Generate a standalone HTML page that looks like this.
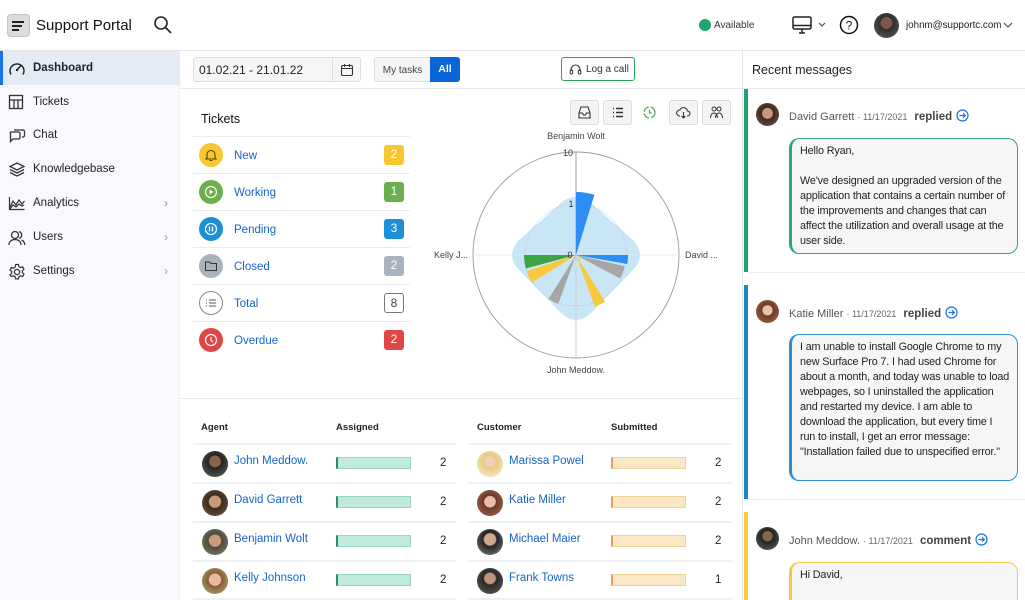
<!DOCTYPE html>
<html><head><meta charset="utf-8"><style>
*{box-sizing:border-box;margin:0;padding:0}
html,body{width:1025px;height:600px;overflow:hidden}
body{font-family:"Liberation Sans",sans-serif;color:#1f2328;background:#fff;position:relative;font-size:11px}
.a{position:absolute}
.hdr{left:0;top:0;width:1025px;height:51px;border-bottom:1px solid #e3e5e8;background:#fff}
.side{left:0;top:51px;width:180px;height:549px;background:#f8f9fc;border-right:1px solid #eceef1}
.nav{position:absolute;left:0;width:180px;height:34px;display:flex;align-items:center;padding-left:33px;font-size:11.5px;color:#222}
.nav svg{position:absolute;left:8px;top:9px}
.nav .chev{position:absolute;left:164px;color:#999;font-size:12px}
.row{position:absolute;left:193px;width:217px;height:37px;border-top:1px solid #ececec}
.ic{position:absolute;left:6px;top:6px;width:24px;height:24px;border-radius:50%}
.lbl{position:absolute;left:41px;top:13px;font-size:11.5px;color:#1565c8}
.bd{position:absolute;left:191px;top:8px;width:20px;height:20px;border-radius:3px;color:#fff;font-size:12px;text-align:center;line-height:19px}
.tr{position:absolute;height:39px;border-top:2px solid #eef0f2}
.av{position:absolute;left:9px;top:6px;width:26px;height:26px;border-radius:50%}
.tr .n{position:absolute;left:41px;top:10px;font-size:11.5px;color:#1565c8}
.bar{position:absolute;left:143px;top:12px;width:75px;height:12px}
.cnt{position:absolute;left:247px;top:12px;font-size:11.5px}
.msgbar{position:absolute;left:744px;width:4px}
.bub{position:absolute;left:789px;width:229px;background:#f6f6f7;border-radius:10px;border:1.5px solid;border-left-width:3px;padding:5px 7px 5px 8px;font-size:10.8px;letter-spacing:-0.15px;line-height:15px;color:#222;overflow:hidden}
.mh{position:absolute;left:789px;font-size:11px;color:#555;white-space:nowrap}
.mh b{color:#444;font-size:11.5px;margin-left:4px}
.mh small{font-size:9px;color:#666}
.mh svg{vertical-align:-2px;margin-left:4px}
.mav{position:absolute;left:756px;width:23px;height:23px;border-radius:50%}
.tb{position:absolute;top:100px;width:29px;height:25px;border:1px solid #ddd;background:#f3f4f5;border-radius:3px}
</style></head><body>
<div class="a hdr"></div>
<div class="a" style="left:7px;top:14px;width:23px;height:23px;background:#dcdcdc;border:1px solid #c4c4c4;border-radius:4px"></div>
<div class="a" style="left:12px;top:21px;width:12px;height:1.5px;background:#222"></div>
<div class="a" style="left:12px;top:25px;width:10px;height:1.5px;background:#222"></div>
<div class="a" style="left:12px;top:29px;width:7px;height:1.5px;background:#222"></div>
<div class="a" style="left:36px;top:17px;font-size:15px;color:#111">Support Portal</div>
<svg class="a" style="left:153px;top:15px" width="20" height="20" viewBox="0 0 20 20"><circle cx="8" cy="8" r="6" fill="none" stroke="#222" stroke-width="1.6"/><path d="M12.5 12.5L18 18" stroke="#222" stroke-width="1.6"/></svg>
<div class="a" style="left:699px;top:19px;width:12px;height:12px;border-radius:50%;background:#1fa56f"></div>
<div class="a" style="left:714px;top:20px;font-size:10px;color:#333">Available</div>
<svg class="a" style="left:792px;top:15px" width="36" height="20" viewBox="0 0 36 20"><rect x="1" y="2" width="18" height="12" rx="1.5" fill="none" stroke="#222" stroke-width="1.5"/><path d="M1 10.5h18M7 18h6M10 14v4" stroke="#222" stroke-width="1.5"/><path d="M27 8l3 3 3-3" fill="none" stroke="#444" stroke-width="1.1"/></svg>
<svg class="a" style="left:839px;top:15px" width="20" height="20" viewBox="0 0 20 20"><circle cx="10" cy="10" r="8.5" fill="none" stroke="#111" stroke-width="1.5"/><text x="10" y="14.5" font-size="12" text-anchor="middle" font-family="Liberation Sans" fill="#111">?</text></svg>
<div class="a" style="left:874px;top:13px;width:25px;height:25px;border-radius:50%;background:radial-gradient(circle at 50% 40%,#7a5a44 0 30%,#2e2e2e 31%,#59615a)"></div>
<div class="a" style="left:906px;top:20px;font-size:9.8px;color:#222">johnm@supportc.com</div>
<svg class="a" style="left:1003px;top:21px" width="10" height="8"><path d="M1 2l4 4 4-4" fill="none" stroke="#444" stroke-width="1.1"/></svg>

<div class="a side"></div>
<div class="nav" style="top:51px;background:#e4ebf5;border-left:3px solid #1a73e8;font-weight:bold;color:#1b2430;padding-left:30px"><svg width="18" height="18" viewBox="0 0 18 18" style="left:5px"><path d="M3 14.5A7 7 0 1 1 15 14.5" fill="none" stroke="#222" stroke-width="1.4"/><path d="M9 10l3.5-4" stroke="#222" stroke-width="1.4"/><circle cx="9" cy="10" r="1.2" fill="#222"/></svg>Dashboard</div>
<div class="nav" style="top:85px"><svg width="16" height="16" viewBox="0 0 16 16"><rect x="1.5" y="1.5" width="13" height="13" fill="none" stroke="#333" stroke-width="1.3"/><path d="M1.5 6h13M6 6v8.5M10 6v8.5" stroke="#333" stroke-width="1.3"/></svg>Tickets</div>
<div class="nav" style="top:118px"><svg width="18" height="16" viewBox="0 0 18 16"><path d="M6 3h9a1.5 1.5 0 0 1 1.5 1.5v4A1.5 1.5 0 0 1 15 10h-1M2.5 5h8A1.5 1.5 0 0 1 12 6.5v4a1.5 1.5 0 0 1-1.5 1.5H5l-2.5 2.5V6.5A1.5 1.5 0 0 1 2.5 5" fill="none" stroke="#333" stroke-width="1.3"/></svg>Chat</div>
<div class="nav" style="top:152px"><svg width="18" height="16" viewBox="0 0 18 16"><path d="M9 2l7 3.5-7 3.5-7-3.5zM2 8.5l7 3.5 7-3.5M2 11.5l7 3.5 7-3.5" fill="none" stroke="#333" stroke-width="1.3"/></svg>Knowledgebase</div>
<div class="nav" style="top:186px"><svg width="18" height="16" viewBox="0 0 18 16"><path d="M1.5 2v12.5h15M2 12l3-6 3 4 3-5 3 4 2.5-3M2 14l3-4 3 2 3-3 3 2 2-1" fill="none" stroke="#333" stroke-width="1.2"/></svg>Analytics<span class="chev">›</span></div>
<div class="nav" style="top:220px"><svg width="18" height="18" viewBox="0 0 18 18"><circle cx="7" cy="6" r="3.5" fill="none" stroke="#333" stroke-width="1.3"/><path d="M1 16c0-3.5 2.7-5.5 6-5.5s6 2 6 5.5M11 2.6a3.5 3.5 0 0 1 0 6.8M13.5 11c2 .8 3.2 2.6 3.2 5" fill="none" stroke="#333" stroke-width="1.3"/></svg>Users<span class="chev">›</span></div>
<div class="nav" style="top:254px"><svg width="18" height="18" viewBox="0 0 18 18"><circle cx="9" cy="9" r="2.6" fill="none" stroke="#333" stroke-width="1.3"/><path d="M7.6 1.5h2.8l.5 2.2 1.6.9 2.1-.7 1.4 2.4-1.7 1.5v1.8l1.7 1.5-1.4 2.4-2.1-.7-1.6.9-.5 2.2H7.6l-.5-2.2-1.6-.9-2.1.7L2 11.700l1.7-1.5V8.4L2 6.9l1.4-2.4 2.1.7 1.6-.9z" fill="none" stroke="#333" stroke-width="1.2"/></svg>Settings<span class="chev">›</span></div>

<!-- toolbar -->
<div class="a" style="left:193px;top:57px;width:168px;height:25px;border:1px solid #ddd;border-radius:3px;background:#f5f6f7"></div>
<div class="a" style="left:332px;top:57px;width:1px;height:25px;background:#ddd"></div>
<div class="a" style="left:199px;top:63px;font-size:12px;color:#222">01.02.21 - 21.01.22</div>
<svg class="a" style="left:340px;top:63px" width="14" height="14" viewBox="0 0 14 14"><rect x="1.5" y="2.5" width="11" height="10" rx="1.5" fill="none" stroke="#333" stroke-width="1.1"/><path d="M1.5 5.5h11M4.5 1v3M9.5 1v3" stroke="#333" stroke-width="1.1"/></svg>
<div class="a" style="left:374px;top:57px;width:57px;height:25px;border:1px solid #ddd;border-radius:3px 0 0 3px;background:#f5f6f7;font-size:10px;color:#444;text-align:center;line-height:25px">My tasks</div>
<div class="a" style="left:430px;top:57px;width:30px;height:25px;background:#0a66d6;border-radius:0 3px 3px 0;color:#fff;font-weight:bold;font-size:10.5px;text-align:center;line-height:25px">All</div>
<div class="a" style="left:561px;top:57px;width:74px;height:24px;border:1px solid #2aa45a;border-radius:3px;font-size:10px;color:#333;line-height:24px;padding-left:24px">Log a call</div>
<svg class="a" style="left:569px;top:63px" width="13" height="13" viewBox="0 0 13 13"><path d="M2 8V6.5a4.5 4.5 0 0 1 9 0V8" fill="none" stroke="#333" stroke-width="1.1"/><rect x="1.2" y="7" width="2.5" height="4" rx="1" fill="none" stroke="#333"/><rect x="9.3" y="7" width="2.5" height="4" rx="1" fill="none" stroke="#333"/></svg>
<div class="a" style="left:180px;top:88px;width:562px;height:1px;background:#e6e7e9"></div>
<div class="a" style="left:180px;top:398px;width:562px;height:1px;background:#e6e7e9"></div>
<div class="a" style="left:742px;top:51px;width:1px;height:549px;background:#e6e7e9"></div>

<!-- tickets -->
<div class="a" style="left:201px;top:112px;font-size:12.5px;color:#111">Tickets</div>
<div class="row" style="top:136px"><div class="ic" style="background:#f7c630"></div><svg class="a" style="left:11px;top:11px" width="14" height="14" viewBox="0 0 14 14"><path d="M3 10V6.5a4 4 0 0 1 8 0V10l1 1H2zM5.5 12.5h3" fill="none" stroke="#5a4300" stroke-width="1.1"/></svg><div class="lbl">New</div><div class="bd" style="background:#f7c630">2</div></div>
<div class="row" style="top:173px"><div class="ic" style="background:#6ab04c"></div><svg class="a" style="left:11px;top:11px" width="14" height="14"><circle cx="7" cy="7" r="5.5" fill="none" stroke="#fff" stroke-width="1.2"/><path d="M5.5 4.5v5l4-2.5z" fill="#fff"/></svg><div class="lbl">Working</div><div class="bd" style="background:#6ab04c">1</div></div>
<div class="row" style="top:210px"><div class="ic" style="background:#1d8fd6"></div><svg class="a" style="left:11px;top:11px" width="14" height="14"><circle cx="7" cy="7" r="5.5" fill="none" stroke="#fff" stroke-width="1.2"/><path d="M5.5 4.5v5M8.5 4.5v5" stroke="#fff" stroke-width="1.3"/></svg><div class="lbl">Pending</div><div class="bd" style="background:#1d8fd6">3</div></div>
<div class="row" style="top:247px"><div class="ic" style="background:#aab3bd"></div><svg class="a" style="left:11px;top:11px" width="14" height="14"><path d="M1.5 3h4l1.5 1.5h5.5v7h-11z" fill="none" stroke="#333" stroke-width="1"/></svg><div class="lbl">Closed</div><div class="bd" style="background:#aab3bd">2</div></div>
<div class="row" style="top:284px"><div class="ic" style="border:1px solid #888"></div><svg class="a" style="left:11px;top:11px" width="14" height="14"><path d="M2 4h1M2 7h1M2 10h1M5 4h7M5 7h7M5 10h7" stroke="#555" stroke-width="1.1"/></svg><div class="lbl">Total</div><div class="bd" style="border:1px solid #777;color:#444">8</div></div>
<div class="row" style="top:321px"><div class="ic" style="background:#e04646"></div><svg class="a" style="left:11px;top:11px" width="14" height="14"><circle cx="7" cy="7" r="5.5" fill="none" stroke="#fff" stroke-width="1.2"/><path d="M7 4v3.5l2 1.5" fill="none" stroke="#fff" stroke-width="1.2"/></svg><div class="lbl">Overdue</div><div class="bd" style="background:#e04646">2</div></div>

<!-- chart tool buttons -->
<div class="tb" style="left:570px"></div><div class="tb" style="left:603px"></div><div class="tb" style="left:669px"></div><div class="tb" style="left:702px"></div>
<svg class="a" style="left:577px;top:105px" width="15" height="15"><path d="M2 8l2-6h7l2 6v5H2zM2 8h3.5l1 2h2l1-2H13" fill="none" stroke="#333" stroke-width="1.1"/></svg>
<svg class="a" style="left:610px;top:105px" width="15" height="15"><path d="M3 3.5h1M3 7.5h1M3 11.5h1M6 3.5h7M6 7.5h7M6 11.5h7" stroke="#333" stroke-width="1.5"/></svg>
<svg class="a" style="left:642px;top:105px" width="15" height="15"><circle cx="7.5" cy="7.5" r="5.5" fill="none" stroke="#4aa35a" stroke-width="1.3" stroke-dasharray="7 2"/><path d="M7.5 4.5v3.5h2" fill="none" stroke="#4aa35a" stroke-width="1.2"/></svg>
<svg class="a" style="left:676px;top:105px" width="15" height="15"><path d="M4 11H3.5a3 3 0 0 1 .3-6 4 4 0 0 1 7.6 1 2.5 2.5 0 0 1 .1 5H11M7.5 7v6M5.5 11l2 2 2-2" fill="none" stroke="#333" stroke-width="1.1"/></svg>
<svg class="a" style="left:709px;top:105px" width="15" height="15"><circle cx="5" cy="4" r="2" fill="none" stroke="#333"/><circle cx="10" cy="4" r="2" fill="none" stroke="#333"/><path d="M1.5 13c0-3 1.5-5 3.5-5s3.5 2 3.5 5M6.5 13c0-3 1.5-5 3.5-5s3.5 2 3.5 5" fill="none" stroke="#333"/></svg>

<!-- polar chart -->
<svg class="a" style="left:420px;top:125px" width="310" height="260" viewBox="420 125 310 260" font-family="Liberation Sans" font-size="9">
<path d="M562,202 Q576,192 590,202 L634,241 Q646,255 634,269 L590,314 Q576,326 562,314 L518,269 Q506,255 518,241 Z" fill="#c8e6f5"/>
<circle cx="576" cy="255" r="103" fill="none" stroke="#999" stroke-width="0.9"/>
<circle cx="576" cy="255" r="51" fill="none" stroke="#bcd" stroke-width="0.5"/>
<path d="M473,255H679" stroke="#e2e6ea" stroke-width="0.8"/>
<path d="M576,152V358" stroke="#ccc" stroke-width="0.8"/>
<path d="M576,152V255" stroke="#999" stroke-width="0.9"/>
<path d="M576,255L576,192A63,63 0 0 1 594.4,194.8Z" fill="#2e8cf5"/>
<path d="M576,255L628,255A52,52 0 0 1 627.2,264Z" fill="#2e8cf5"/>
<path d="M576,255L624.7,266.2A50,50 0 0 1 620.1,278.5Z" fill="#a6a6a6"/>
<path d="M576,255L605.1,301.6A55,55 0 0 1 594.8,306.7Z" fill="#f8c93d"/>
<path d="M576,255L558.2,303.9A52,52 0 0 1 548.4,299.1Z" fill="#a6a6a6"/>
<path d="M576,255L531.9,282.6A52,52 0 0 1 526.5,271.1Z" fill="#f8c93d"/>
<path d="M576,255L525.8,268.5A52,52 0 0 1 524,255Z" fill="#3ea346"/>
<text x="576" y="139" text-anchor="middle" fill="#444">Benjamin Wolt</text>
<text x="568" y="156" text-anchor="middle" fill="#333">10</text>
<text x="571" y="207" text-anchor="middle" fill="#333">1</text>
<text x="570" y="258" text-anchor="middle" fill="#333">0</text>
<text x="468" y="258" text-anchor="end" fill="#444">Kelly J...</text>
<text x="685" y="258" fill="#444">David ...</text>
<text x="576" y="373" text-anchor="middle" fill="#444">John Meddow.</text>
</svg>

<!-- tables -->
<div class="a" style="left:201px;top:422px;font-size:9.5px;font-weight:bold">Agent</div>
<div class="a" style="left:336px;top:422px;font-size:9.5px;font-weight:bold">Assigned</div>
<div class="a" style="left:477px;top:422px;font-size:9.5px;font-weight:bold">Customer</div>
<div class="a" style="left:611px;top:422px;font-size:9.5px;font-weight:bold">Submitted</div>

<div class="tr" style="left:193px;top:443px;width:263px"><div class="av" style="background:radial-gradient(circle at 50% 40%,#8a6448 0 28%,#222 30%,#5d6a5a)"></div><div class="n">John Meddow.</div><div class="bar" style="background:#c1eadf;border:1px solid #9bd4c0;border-left:2px solid #2d8a6a"></div><div class="cnt">2</div></div>
<div class="tr" style="left:193px;top:482px;width:263px"><div class="av" style="background:radial-gradient(circle at 50% 45%,#c99878 0 30%,#3a2a20 34%,#7a5c48)"></div><div class="n">David Garrett</div><div class="bar" style="background:#c1eadf;border:1px solid #9bd4c0;border-left:2px solid #2d8a6a"></div><div class="cnt">2</div></div>
<div class="tr" style="left:193px;top:521px;width:263px"><div class="av" style="background:radial-gradient(circle at 50% 45%,#c89a80 0 30%,#4e4a3a 34%,#7c8a70)"></div><div class="n">Benjamin Wolt</div><div class="bar" style="background:#c1eadf;border:1px solid #9bd4c0;border-left:2px solid #2d8a6a"></div><div class="cnt">2</div></div>
<div class="tr" style="left:193px;top:560px;width:263px"><div class="av" style="background:radial-gradient(circle at 50% 45%,#e8b9a0 0 30%,#8a5a3a 34%,#a8b878)"></div><div class="n">Kelly Johnson</div><div class="bar" style="background:#c1eadf;border:1px solid #9bd4c0;border-left:2px solid #2d8a6a"></div><div class="cnt">2</div></div>
<div class="a" style="left:193px;top:598px;width:263px;height:2px;background:#eef0f2"></div>

<div class="tr" style="left:468px;top:443px;width:264px"><div class="av" style="background:radial-gradient(circle at 50% 40%,#f0d0b8 0 25%,#e8c97a 30%,#f4f0ea)"></div><div class="n">Marissa Powel</div><div class="bar" style="background:#fbe6c6;border:1px solid #f1d09a;border-left:2px solid #e1a255"></div><div class="cnt">2</div></div>
<div class="tr" style="left:468px;top:482px;width:264px"><div class="av" style="background:radial-gradient(circle at 50% 45%,#e8c0a8 0 28%,#6a3a2a 32%,#a66a52)"></div><div class="n">Katie Miller</div><div class="bar" style="background:#fbe6c6;border:1px solid #f1d09a;border-left:2px solid #e1a255"></div><div class="cnt">2</div></div>
<div class="tr" style="left:468px;top:521px;width:264px"><div class="av" style="background:radial-gradient(circle at 50% 40%,#d0a890 0 28%,#222 34%,#888)"></div><div class="n">Michael Maier</div><div class="bar" style="background:#fbe6c6;border:1px solid #f1d09a;border-left:2px solid #e1a255"></div><div class="cnt">2</div></div>
<div class="tr" style="left:468px;top:560px;width:264px"><div class="av" style="background:radial-gradient(circle at 50% 40%,#c09478 0 26%,#2a2a2a 32%,#6a5a50)"></div><div class="n">Frank Towns</div><div class="bar" style="background:#fbe6c6;border:1px solid #f1d09a;border-left:2px solid #e1a255"></div><div class="cnt">1</div></div>
<div class="a" style="left:468px;top:598px;width:264px;height:2px;background:#eef0f2"></div>

<!-- messages -->
<div class="a" style="left:752px;top:63px;font-size:12.5px;color:#222">Recent messages</div>
<div class="a" style="left:743px;top:88px;width:282px;height:1px;background:#e6e7e9"></div>

<div class="msgbar" style="top:89px;height:183px;background:#1ea36a"></div>
<div class="a" style="left:748px;top:272px;width:277px;height:1px;background:#eee"></div>
<div class="mav" style="top:103px;background:radial-gradient(circle at 50% 45%,#c99878 0 30%,#3a2a20 34%,#7a5c48)"></div>
<div class="mh" style="top:109px">David Garrett <small>· 11/17/2021</small> <b>replied</b><svg width="13" height="13"><circle cx="6.5" cy="6.5" r="5.5" fill="none" stroke="#1a73e8" stroke-width="1.2"/><path d="M3.5 6.5h5.5M7 4.2l2.3 2.3L7 8.8" fill="none" stroke="#1a73e8" stroke-width="1.2"/></svg></div>
<div class="bub" style="top:138px;height:116px;border-color:#2ea878">Hello Ryan,<br><br>We've designed an upgraded version of the application that contains a certain number of the improvements and changes that can affect the utilization and overall usage at the user side.</div>

<div class="msgbar" style="top:285px;height:214px;background:#1a86c8"></div>
<div class="a" style="left:748px;top:499px;width:277px;height:1px;background:#eee"></div>
<div class="mav" style="top:300px;background:radial-gradient(circle at 50% 45%,#e8c0a8 0 28%,#6a3a2a 32%,#a66a52)"></div>
<div class="mh" style="top:306px">Katie Miller <small>· 11/17/2021</small> <b>replied</b><svg width="13" height="13"><circle cx="6.5" cy="6.5" r="5.5" fill="none" stroke="#1a73e8" stroke-width="1.2"/><path d="M3.5 6.5h5.5M7 4.2l2.3 2.3L7 8.8" fill="none" stroke="#1a73e8" stroke-width="1.2"/></svg></div>
<div class="bub" style="top:334px;height:147px;border-color:#2a8fd6">I am unable to install Google Chrome to my new Surface Pro 7. I had used Chrome for about a month, and today was unable to load webpages, so I uninstalled the application and restarted my device. I am able to download the application, but every time I run to install, I get an error message: "Installation failed due to unspecified error."</div>

<div class="msgbar" style="top:512px;height:88px;background:#f8c93d"></div>
<div class="mav" style="top:527px;background:radial-gradient(circle at 50% 40%,#8a6448 0 28%,#222 30%,#5d6a5a)"></div>
<div class="mh" style="top:533px">John Meddow. <small>· 11/17/2021</small> <b>comment</b><svg width="13" height="13"><circle cx="6.5" cy="6.5" r="5.5" fill="none" stroke="#1a73e8" stroke-width="1.2"/><path d="M3.5 6.5h5.5M7 4.2l2.3 2.3L7 8.8" fill="none" stroke="#1a73e8" stroke-width="1.2"/></svg></div>
<div class="bub" style="top:562px;height:50px;border-color:#f5c842">Hi David,</div>
</body></html>
